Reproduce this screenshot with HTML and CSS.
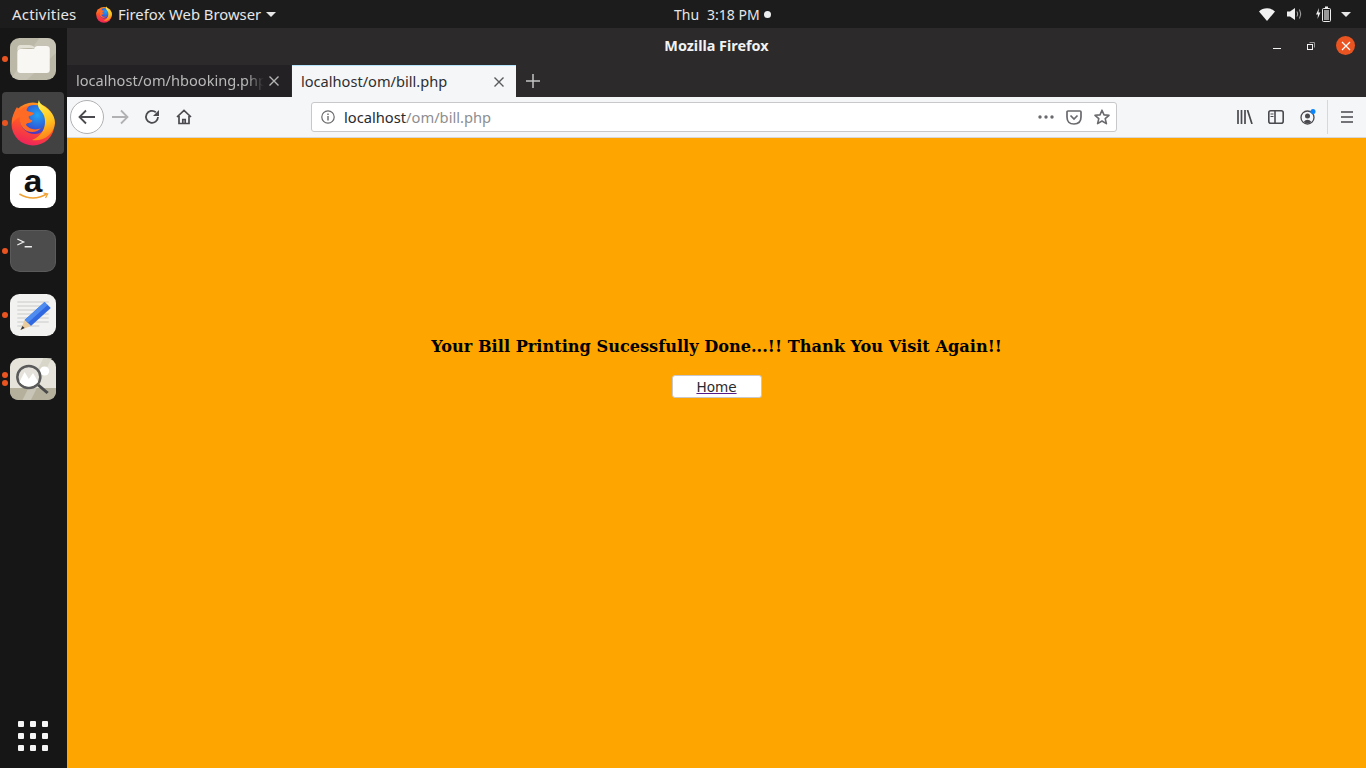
FILE: index.html
```html
<!DOCTYPE html>
<html lang="en">
<head>
<meta charset="utf-8">
<title>Mozilla Firefox</title>
<link rel="stylesheet" href="styles.css">
</head>
<body>
<svg class="defs" width="0" height="0" aria-hidden="true">
  <defs>
    <linearGradient id="ffBody" x1="0.75" y1="0" x2="0.45" y2="1">
      <stop offset="0" stop-color="#ff9a1e"/>
      <stop offset="0.5" stop-color="#ff5a24"/>
      <stop offset="1" stop-color="#f0245a"/>
    </linearGradient>
    <linearGradient id="ffFlame" x1="0.3" y1="0" x2="0.55" y2="1">
      <stop offset="0" stop-color="#fff44f"/>
      <stop offset="0.6" stop-color="#ffc21e"/>
      <stop offset="1" stop-color="#ff7a1e"/>
    </linearGradient>
    <radialGradient id="ffGlobe" cx="0.6" cy="0.35" r="0.7">
      <stop offset="0" stop-color="#1fa4f2"/>
      <stop offset="0.6" stop-color="#2e62dc"/>
      <stop offset="1" stop-color="#5b2bb5"/>
    </radialGradient>
    <symbol id="firefox" viewBox="0 0 44 46">
      <circle cx="22" cy="24" r="21.500" fill="url(#ffBody)"/>
      <circle cx="23.500" cy="19.500" r="14.500" fill="url(#ffGlobe)"/>
      <path d="M1 20 C2 14 4 10 6 7 C7 9 8 10 10 10 C12 7 15 6 18 6 C16 8 15 10 16 11 C18 12 21 12 23 13 C22 15 20 16 18 16 C17 18 19 20 21 20 C22 21 20 23 17 23 C16 23 15 24 15 25 C18 29 24 31 30 28 C27 32 21 33 16 31 C10 28 8 22 9 17 C6 18 3 20 1 24Z" fill="#ff6a24"/>
      <path d="M28 0 C26 4 27 8 30 11 C34 15 35 22 33 28 C31 34 26 38 21 40 C33 42 43 34 44 23 C44 13 36 8 31 5 C30 4 28 2 28 0Z" fill="url(#ffFlame)"/>
    </symbol>
  </defs>
</svg>

<header class="topbar">
  <div class="top-left">
    <span class="activities">Activities</span>
    <svg class="top-ff" width="16" height="17"><use href="#firefox"/></svg>
    <span class="app-name">Firefox Web Browser</span>
    <span class="caret"></span>
  </div>
  <div class="clock"><span class="day">Thu</span><span>3:18 PM</span><span class="rec-dot"></span></div>
  <div class="tray">
    <svg class="tray-wifi" width="16" height="13" viewBox="0 0 16 13"><path d="M0 3.500 C4 -0.800 12 -0.800 16 3.500 L8 13Z" fill="#f2f2f2"/></svg>
    <svg class="tray-vol" width="15" height="14" viewBox="0 0 15 14"><path d="M0 4.500 H3 L8 1 V13 L3 9.500 H0Z" fill="#eeeeee"/><path d="M10 4.500 Q11.500 7 10 9.500 M12.500 2.500 Q15 7 12.500 11.500" fill="none" stroke="#aaaaaa" stroke-width="1"/></svg>
    <svg class="tray-bat" width="15" height="16" viewBox="0 0 15 16"><path d="M3 2 L0 8.500 H2 L1.500 13 L4.500 6.500 H2.500Z" fill="#eeeeee"/><rect x="6.500" y="2.500" width="8" height="13" rx="1" fill="none" stroke="#eeeeee"/><rect x="9" y="0.500" width="3" height="2" fill="#eeeeee"/><rect x="8" y="4" width="5" height="10" fill="#9a9a9a"/></svg>
    <span class="caret"></span>
  </div>
</header>

<div class="desktop">
  <nav class="dock">
    <div class="dock-item">
      <span class="run-dot"></span>
      <svg width="46" height="44" viewBox="2 0 44 44" preserveAspectRatio="none"><rect x="2" y="1" width="44" height="42" rx="9" fill="#bcb8a8"/><path d="M30 1 H37 Q46 1 46 10 V16 L18 43 H11 L4 40Z" fill="#c6c3b4"/><path d="M9 12 Q9 8 12 8 H20 Q24 8 26 11 H19 Q9 11 9 14Z" fill="#e2dfd5"/><path d="M9 16 Q9 12 12 12 H18 L25 12 Q26 9 28 9 H37 Q40 9 40 12 V33 Q40 36 37 36 H12 Q9 36 9 33Z" fill="#f8f7f4"/></svg>
    </div>
    <div class="dock-item active">
      <span class="run-dot"></span>
      <svg width="44" height="46"><use href="#firefox"/></svg>
    </div>
    <div class="dock-item">
      <svg width="46" height="50" viewBox="2 -3 44 50" preserveAspectRatio="none"><rect x="2" y="1" width="44" height="42" rx="9" fill="#ffffff"/><text x="24" y="27" class="amazon-a">a</text><path d="M11 29 Q24 37 37 29" fill="none" stroke="#f0a030" stroke-width="1.500"/><path d="M34 28 L38 29 L36 33" fill="none" stroke="#f0a030" stroke-width="1.200"/></svg>
    </div>
    <div class="dock-item">
      <span class="run-dot"></span>
      <svg width="46" height="44" viewBox="2 0 44 44" preserveAspectRatio="none"><rect x="2.500" y="1.500" width="43" height="41" rx="9" fill="#4c4c4c" stroke="#5a5a5a"/><path d="M9 10 L15 13 L9 16" fill="none" stroke="#eeeeee" stroke-width="1.300"/><rect x="16" y="17" width="7" height="1.500" fill="#eeeeee"/></svg>
    </div>
    <div class="dock-item">
      <span class="run-dot"></span>
      <svg width="46" height="44" viewBox="2 0 44 44" preserveAspectRatio="none"><rect x="2" y="1" width="44" height="42" rx="9" fill="#f2f2f0"/><path d="M9 9 H39 M9 13 H39 M9 17 H39 M9 21 H39 M9 25 H39 M9 29 H39 M9 33 H30" stroke="#c9c9c9" stroke-width="1"/><path d="M35 9 L41 15 L22 33 L16 27Z" fill="#2f68e0"/><path d="M35 9 L38 12 L19 30 L16 27Z" fill="#4f8cf0"/><path d="M16 27 L22 33 L12 37Z" fill="#eacb9c"/><path d="M14 33 L16 35 L12 37Z" fill="#333333"/></svg>
    </div>
    <div class="dock-item two-dots">
      <span class="run-dot"></span>
      <span class="run-dot"></span>
      <svg width="46" height="44" viewBox="2 0 44 44" preserveAspectRatio="none"><rect x="2" y="1" width="44" height="42" rx="9" fill="#e6e4da"/><path d="M2 31 H46 V34 Q46 43 37 43 H11 Q2 43 2 34Z" fill="#b5b09c"/><path d="M34 1 L42 1 L22 43 L14 43Z" fill="#d2cfc2" opacity="0.7"/><circle cx="35" cy="14" r="4.500" fill="#ffffff"/><circle cx="20" cy="20" r="11" fill="#e4e2da" stroke="#5a5a5a" stroke-width="2.400"/><path d="M11 25 L16 15 L20 22 L24 16 L29 25 Q20 34 11 25Z" fill="#ffffff"/><path d="M29 28 L38 36" stroke="#4a4a4a" stroke-width="3"/></svg>
    </div>
    <div class="apps-grid">
      <i></i><i></i><i></i><i></i><i></i><i></i><i></i><i></i><i></i>
    </div>
  </nav>

  <main class="window">
    <div class="titlebar">
      <span></span>
      <span class="title">Mozilla Firefox</span>
      <div class="win-controls">
        <svg class="wc-min" width="8" height="2" viewBox="0 0 8 2"><rect width="8" height="1" fill="#f2f2f2"/></svg>
        <svg class="wc-max" width="8" height="8" viewBox="0 0 8 8"><rect x="0.500" y="2.500" width="5" height="5" fill="none" stroke="#f2f2f2"/><path d="M2.500 0.500 H7.500 V5.500" fill="none" stroke="#999999"/></svg>
        <span class="wc-close"><svg width="10" height="10" viewBox="0 0 10 10"><path d="M1 1 L9 9 M9 1 L1 9" stroke="#ffffff" stroke-width="1.200"/></svg></span>
      </div>
    </div>
    <div class="tabstrip">
      <div class="tab inactive">
        <span class="tab-label">localhost/om/hbooking.php</span>
        <svg width="10" height="10" viewBox="0 0 10 10"><path d="M0.500 0.500 L9.500 9.500 M9.500 0.500 L0.500 9.500" stroke="#b5b5b5" stroke-width="1.400"/></svg>
      </div>
      <div class="tab selected">
        <span class="tab-label">localhost/om/bill.php</span>
        <svg width="10" height="10" viewBox="0 0 10 10"><path d="M0.500 0.500 L9.500 9.500 M9.500 0.500 L0.500 9.500" stroke="#5a5a5c" stroke-width="1.400"/></svg>
      </div>
      <svg class="new-tab" width="14" height="14" viewBox="0 0 14 14"><path d="M7 0 V14 M0 7 H14" stroke="#c4c4c4" stroke-width="1.500"/></svg>
    </div>
    <div class="navbar">
      <span class="back-btn"><svg width="18" height="16" viewBox="0 0 18 16"><path d="M17 8 H2 M8 1.500 L1.500 8 L8 14.500" fill="none" stroke="#4a4a4f" stroke-width="1.800"/></svg></span>
      <svg class="fwd" width="18" height="16" viewBox="0 0 18 16"><path d="M1 8 H16 M10 1.500 L16.500 8 L10 14.500" fill="none" stroke="#b1b1b3" stroke-width="1.800"/></svg>
      <svg class="reload" width="16" height="16" viewBox="0 0 16 16"><path d="M14 8 A6 6 0 1 1 11.800 3.200" fill="none" stroke="#4a4a4f" stroke-width="1.800"/><path d="M15 1 V7 H9Z" fill="#4a4a4f"/></svg>
      <svg class="home" width="16" height="16" viewBox="0 0 16 16"><path d="M1 8 L8 1.500 L15 8 M3 7 V14.500 H13 V7 M6.800 14.500 V10.500 H9.200 V14.500" fill="none" stroke="#4a4a4f" stroke-width="1.700"/></svg>
      <div class="urlbar">
        <svg class="info" width="14" height="14" viewBox="0 0 14 14"><circle cx="7" cy="7" r="6.200" fill="none" stroke="#6a6a6e" stroke-width="1.200"/><rect x="6.300" y="6" width="1.400" height="4.500" fill="#6a6a6e"/><rect x="6.300" y="3.500" width="1.400" height="1.500" fill="#6a6a6e"/></svg>
        <span class="url"><span class="host">localhost</span>/om/bill.php</span>
        <svg class="more" width="16" height="4" viewBox="0 0 16 4"><circle cx="2" cy="2" r="1.700" fill="#6a6a6e"/><circle cx="8" cy="2" r="1.700" fill="#6a6a6e"/><circle cx="14" cy="2" r="1.700" fill="#6a6a6e"/></svg>
        <svg class="pocket" width="16" height="15" viewBox="0 0 16 15"><path d="M2 1 H14 Q15 1 15 2 V7 Q15 14 8 14 Q1 14 1 7 V2 Q1 1 2 1Z M4.500 5.500 L8 9 L11.500 5.500" fill="none" stroke="#6a6a6e" stroke-width="1.700"/></svg>
        <svg class="star" width="16" height="16" viewBox="0 0 16 16"><path d="M8 1.200 L10 5.900 L15 6.300 L11.200 9.600 L12.400 14.600 L8 12 L3.600 14.600 L4.800 9.600 L1 6.300 L6 5.900Z" fill="none" stroke="#6a6a6e" stroke-width="1.600" stroke-linejoin="round"/></svg>
      </div>
      <svg class="library" width="16" height="14" viewBox="0 0 16 14"><path d="M1 0 V14 M4.500 0 V14 M8 0 V14 M10.500 0 L15 14" fill="none" stroke="#4a4a4f" stroke-width="1.700"/></svg>
      <svg class="sidebar" width="16" height="14" viewBox="0 0 16 14"><rect x="0.800" y="0.800" width="14.400" height="12.400" rx="2" fill="none" stroke="#4a4a4f" stroke-width="1.600"/><path d="M7 1 V13" stroke="#4a4a4f" stroke-width="1.600"/><path d="M2.500 4 H5.500 M2.500 6.500 H5.500" stroke="#4a4a4f" stroke-width="1"/></svg>
      <svg class="account" width="16" height="16" viewBox="0 0 16 16"><circle cx="7.500" cy="8.500" r="6.500" fill="none" stroke="#4a4a4f" stroke-width="1.300"/><circle cx="7.500" cy="7" r="2.500" fill="#4a4a4f"/><path d="M3.500 13 Q7.500 8.500 11.500 13 Q7.500 15.500 3.500 13Z" fill="#4a4a4f"/><circle cx="13" cy="2.500" r="2.500" fill="#0a84ff"/></svg>
      <span class="separator"></span>
      <svg class="menu" width="12" height="12" viewBox="0 0 12 12"><path d="M0 1 H12 M0 6 H12 M0 11 H12" stroke="#4a4a4f" stroke-width="1.700"/></svg>
    </div>
    <section class="page">
      <h3 class="message">Your Bill Printing Sucessfully Done...!! Thank You Visit Again!!</h3>
      <a class="home-btn" href="#">Home</a>
    </section>
  </main>
</div>
</body>
</html>
```
FILE: styles.css
```css
* { box-sizing: border-box; }
html, body { margin: 0; height: 100%; overflow: hidden; }
body { display: flex; flex-direction: column; width: 1366px; height: 768px; font-family: "Noto Sans", sans-serif; background: #ffa500; }
.defs { position: absolute; }
svg { display: block; flex: none; }

.topbar { display: flex; align-items: center; height: 28px; background: #1c1c1c; color: #e6e6e6; font-size: 14px; flex: none; }
.top-left { display: flex; align-items: center; width: 674px; padding-left: 12px; }
.activities { width: 84px; font-size: 15px; letter-spacing: 0.2px; }
.app-name { margin-left: 6px; font-size: 14.800px; }
.caret { width: 0; height: 0; border-left: 5px solid transparent; border-right: 5px solid transparent; border-top: 5px solid #e6e6e6; }
.top-left .caret { margin-left: 5px; }
.clock { display: flex; align-items: center; }
.day { margin-right: 8px; }
.rec-dot { width: 7px; height: 7px; border-radius: 50%; background: #eeeeee; margin-left: 4px; }
.tray { display: flex; align-items: center; margin-left: auto; padding-right: 15px; }
.tray-vol { margin-left: 12px; }
.tray-bat { margin-left: 14px; }
.tray .caret { margin-left: 10px; }

.desktop { display: flex; flex: 1; min-height: 0; }
.dock { display: flex; flex-direction: column; align-items: flex-start; width: 67px; flex: none; background: #161616; padding-left: 2px; }
.dock-item { position: relative; display: flex; align-items: center; justify-content: center; width: 62px; height: 62px; margin-bottom: 2px; border-radius: 4px; }
.dock-item.active { background: #424242; }
.run-dot { position: absolute; left: 0; top: 28px; width: 6px; height: 6px; border-radius: 50%; background: #e95420; }
.two-dots .run-dot:first-child { top: 24px; }
.two-dots .run-dot:nth-child(2) { top: 32px; }
.amazon-a { font-family: "Liberation Sans", sans-serif; font-weight: 700; font-size: 32px; text-anchor: middle; fill: #111111; }
.apps-grid { display: grid; grid-template-columns: repeat(3, 6px); grid-auto-rows: 6px; gap: 6px; margin: auto 0 17px 16px; }
.apps-grid i { background: #f5f5f5; border-radius: 1px; }

.window { display: flex; flex-direction: column; flex: 1; min-width: 0; }
.titlebar { display: grid; grid-template-columns: 1fr auto 1fr; align-items: center; height: 37px; padding-bottom: 2px; background: #2c2a2b; flex: none; }
.title { color: #f2f2f2; font-size: 14.400px; font-weight: 700; }
.win-controls { display: flex; align-items: center; justify-content: flex-end; padding-right: 11px; }
.wc-min { margin-top: 6px; }
.wc-max { margin-left: 26px; }
.wc-close { display: flex; align-items: center; justify-content: center; width: 19px; height: 19px; border-radius: 50%; background: #e95420; margin-left: 21px; }
.tabstrip { display: flex; align-items: stretch; height: 32px; background: #2c2a2b; flex: none; }
.tab { display: flex; align-items: center; justify-content: space-between; width: 224px; padding: 0 12px 0 9px; font-size: 14.600px; }
.tab-label { white-space: nowrap; overflow: hidden; padding-bottom: 2px; }
.tab.inactive { background: #232123; color: #b9b9b9; margin-right: 1px; }
.tab.inactive .tab-label { width: 188px; -webkit-mask-image: linear-gradient(to right, #000 170px, transparent 188px); mask-image: linear-gradient(to right, #000 170px, transparent 188px); }
.tab.selected { background: #f5f6f7; color: #2e2e30; border-top: 1px solid #b5e3fb; }
.new-tab { align-self: center; margin-left: 10px; }

.navbar { display: flex; align-items: center; height: 41px; background: #f5f6f7; border-bottom: 1px solid #d6d6d8; flex: none; }
.back-btn { display: flex; align-items: center; justify-content: center; width: 34px; height: 34px; margin-left: 3px; border: 1px solid #b1b1b3; border-radius: 50%; background: #ffffff; }
.fwd { margin-left: 7px; }
.reload { margin-left: 15px; }
.home { margin-left: 16px; }
.urlbar { display: flex; align-items: center; width: 806px; height: 30px; margin-left: 119px; padding: 0 6px 0 9px; background: #ffffff; border: 1px solid #c8c8ca; border-radius: 3px; }
.url { margin-left: 9px; font-size: 14.700px; color: #8e8e90; }
.host { color: #2a2a2e; }
.more { margin-left: auto; }
.pocket { margin-left: 12px; }
.star { margin-left: 12px; }
.library { margin-left: 120px; }
.sidebar { margin-left: 15px; }
.account { margin-left: 16px; }
.separator { width: 1px; height: 34px; background: #d8d8da; margin-left: 11px; }
.menu { margin-left: 13px; }

.page { flex: 1; background: #ffa500; display: flex; flex-direction: column; align-items: center; padding-top: 198px; }
.message { margin: 0; font-family: "DejaVu Serif", serif; font-size: 16.170px; font-weight: 700; line-height: 22px; color: #000000; }
.home-btn { display: flex; justify-content: center; align-items: center; width: 90px; height: 23px; margin-top: 17px; background: #ffffff; border: 1px solid #c8c8cc; border-radius: 3px; font-family: "DejaVu Sans", sans-serif; font-size: 13.600px; color: #2a2a2e; text-decoration-color: #551a8b; }
```
